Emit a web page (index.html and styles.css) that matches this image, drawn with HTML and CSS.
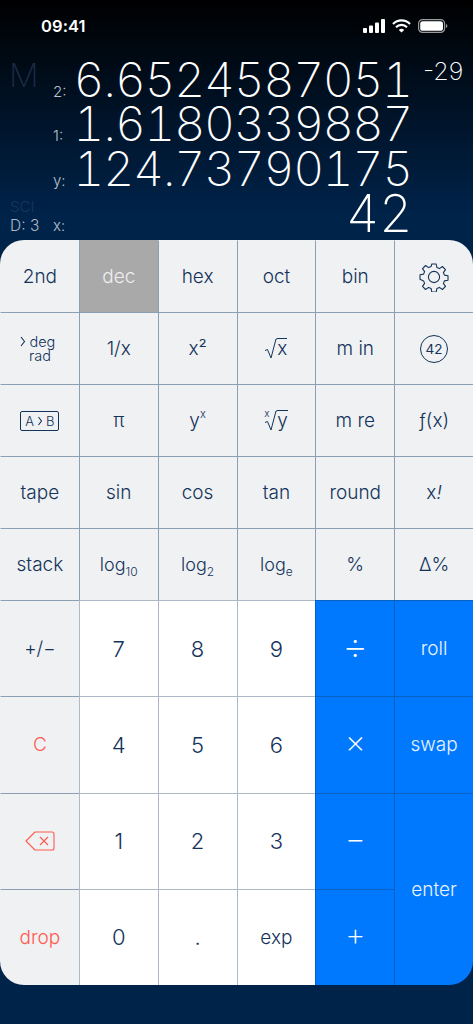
FILE: index.html
```html
<!DOCTYPE html>
<html lang="en">
<head>
<meta charset="utf-8">
<title>RPN Calculator</title>
<link rel="stylesheet" href="styles.css">
</head>
<body>
<div class="screen">
  <header class="status">
    <span class="time">09:41</span>
    <span class="status-icons">
      <svg width="22" height="14" viewBox="0 0 22 14" fill="#fff"><rect x="0" y="9" width="4" height="5" rx="1"/><rect x="6" y="6.5" width="4" height="7.5" rx="1"/><rect x="12" y="3.5" width="4" height="10.5" rx="1"/><rect x="18" y="0" width="4" height="14" rx="1"/></svg>
      <svg width="19" height="14" viewBox="0 0 19 14" fill="none" stroke="#fff" stroke-width="2.2"><path d="M1 5a12 12 0 0 1 17 0"/><path d="M4 8.2a7.6 7.6 0 0 1 11 0"/><path d="M9.5 13.6 6.8 11a3.8 3.8 0 0 1 5.4 0z" fill="#fff" stroke="none"/></svg>
      <svg width="30" height="14" viewBox="0 0 30 14" fill="none"><rect x=".6" y=".6" width="26" height="12.8" rx="4" stroke="#fff" stroke-opacity=".6" stroke-width="1.2"/><rect x="2.2" y="2.2" width="22.8" height="9.6" rx="2.6" fill="#fff"/><path d="M28 5v4a2 2 0 0 0 1.4-2A2 2 0 0 0 28 5z" fill="#fff" fill-opacity=".6"/></svg>
    </span>
  </header>

  <section class="display">
    <div class="row">
      <span class="side side-m">M</span><span class="reg">2:</span><span class="value">6.6524587051</span><span class="exp">-29</span>
    </div>
    <div class="row">
      <span class="side"></span><span class="reg">1:</span><span class="value">1.6180339887</span><span class="exp"></span>
    </div>
    <div class="row">
      <span class="side"></span><span class="reg">y:</span><span class="value">124.73790175</span><span class="exp"></span>
    </div>
    <div class="row">
      <span class="side side-info"><span class="sci">SCI</span><span class="digits">D: 3</span></span><span class="reg">x:</span><span class="value value-x">42</span><span class="exp"></span>
    </div>
  </section>

  <main class="keypad">
    <div class="key">2nd</div>
    <div class="key key-on">dec</div>
    <div class="key">hex</div>
    <div class="key">oct</div>
    <div class="key">bin</div>
    <div class="key">
      <svg class="gear" width="30" height="30" viewBox="0 0 30 30" fill="none" stroke="#14335a" stroke-width="1.1" stroke-linejoin="round"><path d="M12.8 2h4.4l.7 3.6 2.5 1 3-2.1 3.1 3.1-2.1 3 1 2.5 3.6.7v4.4l-3.6.7-1 2.5 2.1 3-3.1 3.1-3-2.1-2.5 1-.7 3.6h-4.4l-.7-3.6-2.5-1-3 2.1-3.1-3.1 2.1-3-1-2.5L1 17.2v-4.4l3.6-.7 1-2.5-2.1-3 3.1-3.1 3 2.1 2.5-1z"/><circle cx="15" cy="15" r="5.6"/></svg>
    </div>

    <div class="key"><span class="degrad"><span class="deg"><svg width="6" height="11" viewBox="0 0 6 11" fill="none" stroke="#14335a" stroke-width="1.1"><path d="M1 1l3.5 4.5L1 10"/></svg>deg</span><span>rad</span></span></div>
    <div class="key">1/x</div>
    <div class="key">x²</div>
    <div class="key"><span class="root"><svg class="radical" width="12" height="21" viewBox="0 0 12 21" fill="none" stroke="#14335a" stroke-width="1"><path d="M0 12.5l2.5-1 3.5 8.5L11 1h1"/></svg><span class="over">x</span></span></div>
    <div class="key">m in</div>
    <div class="key"><span class="circled">42</span></div>

    <div class="key"><span class="swapbox">A<svg width="6" height="10" viewBox="0 0 6 10" fill="none" stroke="#14335a" stroke-width="1.1"><path d="M1.5 1l3 4-3 4"/></svg>B</span></div>
    <div class="key">π</div>
    <div class="key"><span>y<sup class="sup">x</sup></span></div>
    <div class="key"><span class="root"><span class="root-index">x</span><svg class="radical" width="12" height="21" viewBox="0 0 12 21" fill="none" stroke="#14335a" stroke-width="1"><path d="M0 12.5l2.5-1 3.5 8.5L11 1h1"/></svg><span class="over">y</span></span></div>
    <div class="key">m re</div>
    <div class="key">ƒ(x)</div>

    <div class="key">tape</div>
    <div class="key">sin</div>
    <div class="key">cos</div>
    <div class="key">tan</div>
    <div class="key">round</div>
    <div class="key">x<i>!</i></div>

    <div class="key">stack</div>
    <div class="key key-log"><span>log<sub class="sub">10</sub></span></div>
    <div class="key key-log"><span>log<sub class="sub">2</sub></span></div>
    <div class="key key-log"><span>log<sub class="sub">e</sub></span></div>
    <div class="key">%</div>
    <div class="key">Δ%</div>

    <div class="key">+/−</div>
    <div class="key key-num">7</div>
    <div class="key key-num">8</div>
    <div class="key key-num">9</div>
    <div class="key key-op key-sym key-div">÷</div>
    <div class="key key-op">roll</div>

    <div class="key key-red">C</div>
    <div class="key key-num">4</div>
    <div class="key key-num">5</div>
    <div class="key key-num">6</div>
    <div class="key key-op key-sym">×</div>
    <div class="key key-op">swap</div>

    <div class="key key-red">
      <svg width="30" height="20" viewBox="0 0 30 20" fill="none" stroke="#ff5a50" stroke-width="1.1" stroke-linejoin="round"><path d="M1 10 10 1h17a2 2 0 0 1 2 2v14a2 2 0 0 1-2 2H10z"/><path d="M15 6l8 8M23 6l-8 8"/></svg>
    </div>
    <div class="key key-num">1</div>
    <div class="key key-num">2</div>
    <div class="key key-num">3</div>
    <div class="key key-op key-sym">−</div>
    <div class="key key-op key-enter">enter</div>

    <div class="key key-red">drop</div>
    <div class="key key-num">0</div>
    <div class="key key-num">.</div>
    <div class="key key-num key-exp">exp</div>
    <div class="key key-op key-sym">+</div>
  </main>
</div>
</body>
</html>
```
FILE: styles.css
```css
* { box-sizing: border-box; }
html, body { margin: 0; padding: 0; }
body {
  width: 473px;
  height: 1024px;
  overflow: hidden;
  font-family: Inter, "Liberation Sans", sans-serif;
}
.screen {
  width: 473px;
  height: 1024px;
  display: flex;
  flex-direction: column;
  background: linear-gradient(#000 0, #00234a 215px, #00234a 100%);
}

.status {
  height: 52px;
  flex: none;
  display: flex;
  justify-content: space-between;
  align-items: center;
  padding: 0 25px 0 41px;
}
.time { color: #fff; font-size: 16.5px; font-weight: 600; letter-spacing: .1px; }
.status-icons { display: flex; align-items: center; gap: 7px; }

.display { height: 188px; flex: none; padding-top: 5px; display: flex; flex-direction: column; }
.row { height: 44.7px; flex: none; display: flex; align-items: flex-end; }
.side { width: 53px; flex: none; color: #1a2c44; }
.side-m { font-size: 33px; font-weight: 200; padding-left: 9px; line-height: 36px; align-self: flex-start; }
.side-info { display: flex; flex-direction: column; padding-left: 10px; }
.sci { font-size: 15px; font-weight: 300; line-height: 18px; color: #17365e; }
.digits { font-size: 15.5px; font-weight: 300; line-height: 20px; color: #aeb8c6; }
.reg { width: 20px; flex: none; font-size: 15px; font-weight: 300; color: #b9c2ce; line-height: 20px; }
.value {
  width: 339px;
  flex: none;
  text-align: right;
  color: #fff;
  font-size: 48px;
  font-weight: 250;
  line-height: 45px;
  letter-spacing: -1.3px;
  font-variant-numeric: tabular-nums;
  white-space: nowrap;
}
.value-x { font-size: 52px; letter-spacing: -.5px; }
.exp { align-self: flex-start; color: #fff; font-size: 25px; font-weight: 200; padding-left: 11px; line-height: 28px; }

.keypad {
  height: 745px;
  flex: none;
  display: grid;
  grid-template-columns: repeat(6, 1fr);
  grid-template-rows: repeat(5, 72px) repeat(4, 96.25px);
  border-radius: 24px;
  overflow: hidden;
}
.key {
  display: flex;
  align-items: center;
  justify-content: center;
  background: #eff1f3;
  color: #14335a;
  font-size: 19px;
  font-weight: 300;
  border-left: 1px solid #8d9fb5;
  border-top: 1px solid #8d9fb5;
  white-space: nowrap;
}
.key:nth-child(-n+6) { border-top-color: transparent; }
.key:nth-child(6n+1) { border-left-color: transparent; }
.key-on { background: #a9a9a9; color: #eeeeee; }
.key-num { background: #fff; font-size: 22px; border-color: #aeb9c8; }
.key-exp { font-size: 19px; }
.key-red { color: #ff5a50; }
.key-op { background: #0079ff; color: #eaf3ff; border-color: #0a5fc0; }
.key-sym { font-size: 32px; font-weight: 200; color: #fff; padding-bottom: 6px; }
.key-div { font-size: 40px; }
.key-enter { grid-row: span 2; }
.key-log { font-size: 18px; }

.degrad { display: flex; flex-direction: column; align-items: center; font-size: 14.5px; line-height: 14px; }
.deg { display: flex; align-items: center; gap: 3px; margin-left: -4px; }
.circled {
  width: 28px; height: 28px;
  border: 1px solid #14335a;
  border-radius: 50%;
  display: flex; align-items: center; justify-content: center;
  font-size: 13.5px;
  font-weight: 400;
}
.swapbox {
  width: 39px; height: 20px;
  border: 1px solid #14335a;
  border-radius: 2px;
  display: flex; align-items: center; justify-content: center; gap: 3px;
  font-size: 13px;
}
.sup { font-size: 11px; vertical-align: 9px; line-height: 0; }
.sub { font-size: 12px; vertical-align: -5px; line-height: 0; }
.root { position: relative; display: inline-flex; align-items: flex-end; }
.radical { display: block; flex: none; }
.over { border-top: 1px solid #14335a; line-height: 20px; height: 21px; }
.root-index {
  position: absolute;
  left: -1px;
  top: -2px;
  font-size: 10px;
  line-height: 10px;
}
```
